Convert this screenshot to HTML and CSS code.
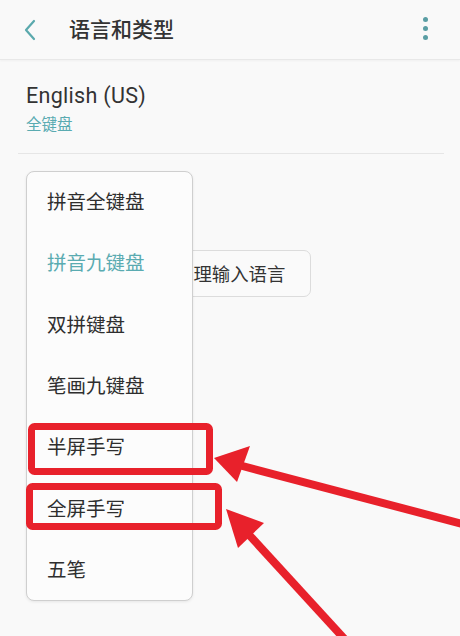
FILE: index.html
```html
<!DOCTYPE html>
<html lang="zh">
<head>
<meta charset="utf-8">
<link rel="stylesheet" href="styles.css">
</head>
<body>
<div class="page">
  <header class="topbar">
    <svg class="back" width="14" height="22" viewBox="0 0 14 22"><path d="M11 2 L3 11 L11 20" fill="none" stroke="#5aa9ad" stroke-width="2.2" stroke-linecap="round" stroke-linejoin="round"/></svg>
    <h1 class="title">语言和类型</h1>
    <div class="more"><span></span><span></span><span></span></div>
  </header>
  <section class="lang">
    <div class="lang-name">English (US)</div>
    <div class="lang-sub">全键盘</div>
  </section>
  <div class="divider"></div>
  <div class="manage-row">
    <div class="manage-btn">管理输入语言</div>
  </div>

  <ul class="menu">
    <li>拼音全键盘</li>
    <li class="active">拼音九键盘</li>
    <li>双拼键盘</li>
    <li>笔画九键盘</li>
    <li>半屏手写</li>
    <li>全屏手写</li>
    <li>五笔</li>
  </ul>

  <svg class="annot" width="460" height="636" viewBox="0 0 460 636">
    <rect x="31.5" y="426.5" width="178" height="45" rx="3" fill="none" stroke="#e8212b" stroke-width="7"/>
    <rect x="29.5" y="486.5" width="189" height="40" rx="3" fill="none" stroke="#e8212b" stroke-width="7"/>
    <line x1="470" y1="526" x2="235" y2="464" stroke="#e8212b" stroke-width="8"/>
    <polygon points="214,458 250,446 237,482" fill="#e8212b"/>
    <line x1="350" y1="645" x2="240" y2="525" stroke="#e8212b" stroke-width="8"/>
    <polygon points="226,509 264,523 238,548" fill="#e8212b"/>
  </svg>
</div>
</body>
</html>
```
FILE: styles.css
```css
* { box-sizing: border-box; }
html, body { margin: 0; padding: 0; }
body {
  background: #f9f9f9;
  font-family: "Noto Sans CJK SC", "Noto Sans", sans-serif;
  color: #333;
}
.page {
  position: relative;
  width: 460px;
  height: 636px;
  overflow: hidden;
}
.topbar {
  height: 60px;
  display: flex;
  align-items: center;
  padding: 0 20px 0 23px;
  border-bottom: 1px solid #e8e8e8;
  box-shadow: 0 1px 2px rgba(0,0,0,0.04);
}
.back { display: block; margin-top: 0; }
.title {
  margin: 0 0 0 32px;
  font-size: 21px;
  font-weight: 500;
  color: #333;
  flex: 1;
  line-height: 1;
  padding-bottom: 2px;
}
.more {
  display: flex;
  flex-direction: column;
  gap: 4px;
  margin-right: 12px;
  padding-bottom: 2px;
}
.more span {
  width: 5px;
  height: 5px;
  border-radius: 50%;
  background: #5a9ea4;
}
.lang {
  padding: 22px 26px 0;
  height: 93px;
}
.lang-name {
  font-family: "Roboto", "Noto Sans", sans-serif;
  font-size: 21.5px;
  letter-spacing: 0.3px;
  line-height: 28px;
  color: #333;
}
.lang-sub {
  font-size: 15.5px;
  line-height: 20px;
  color: #5aabb1;
  margin-top: 3px;
}
.divider {
  height: 1px;
  margin: 0 16px 0 18px;
  background: #e6e6e6;
}
.manage-row {
  padding: 96px 0 0 155px;
}
.manage-btn {
  width: 156px;
  height: 47px;
  border: 1px solid #dcdcdc;
  border-radius: 7px;
  background: #fafafa;
  font-size: 18.4px;
  line-height: 44px;
  padding-left: 19px;
  color: #333;
}
.menu {
  position: absolute;
  left: 26px;
  top: 171px;
  width: 167px;
  height: 430px;
  margin: 0;
  padding: 0;
  list-style: none;
  background: #fcfcfc;
  border: 1px solid #cfcfcf;
  border-radius: 8px;
  box-shadow: 0 1px 3px rgba(0,0,0,0.08);
}
.menu li {
  height: 61.3px;
  display: flex;
  align-items: center;
  padding: 0 0 4px 20px;
  font-size: 19.5px;
  color: #2e2e2e;
}
.menu li.active { color: #5aabb1; }
.annot {
  position: absolute;
  left: 0;
  top: 0;
  pointer-events: none;
}
```
